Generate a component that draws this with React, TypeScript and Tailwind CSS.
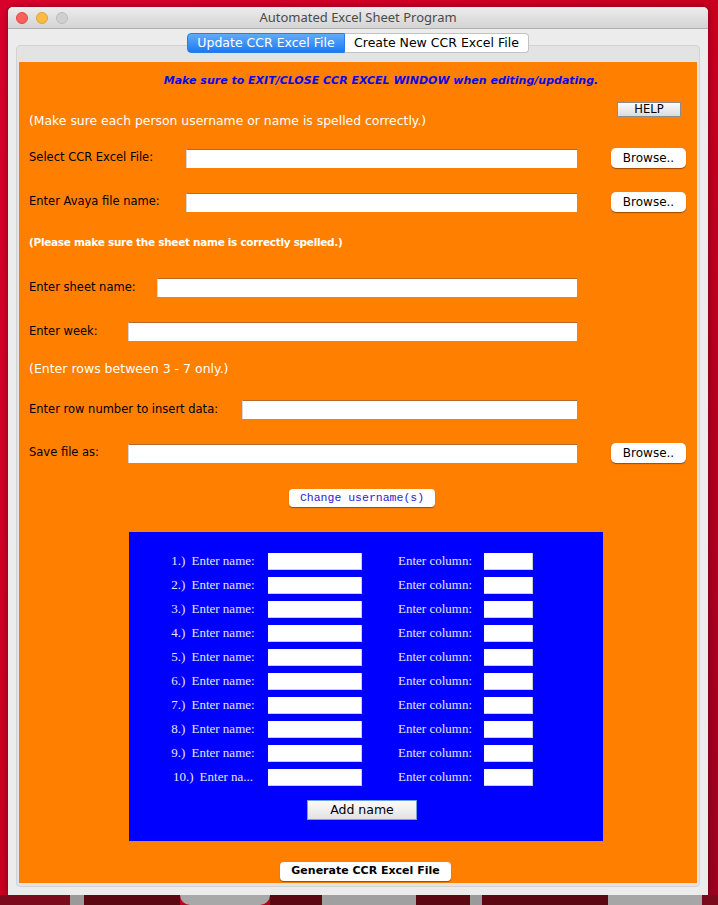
import React from "react";

const names = ["1.)", "2.)", "3.)", "4.)", "5.)", "6.)", "7.)", "8.)", "9.)", "10.)"];

const Field = ({ w }: { w: string }) => (
  <div className={`${w} h-[19px] bg-white border-t border-l border-t-[#b8692a] border-l-[#d6d6d6]`} />
);

const Browse = () => (
  <div className="ml-[34px] w-[75px] h-[20px] rounded-[5px] bg-white shadow-[0_1px_1px_rgba(120,50,0,0.7)] flex items-center justify-center text-[12px] text-black">
    Browse..
  </div>
);

const App = () => {
  return (
    <div className="w-[718px] h-[905px] overflow-hidden bg-gradient-to-br from-[#d8002c] via-[#c9001f] to-[#9c0020] pt-[7px] font-['DejaVu_Sans',sans-serif]">
      {/* Window */}
      <div className="ml-[8px] w-[700px] h-[888px] rounded-t-[5px] bg-[#ececec] shadow-[0_0_6px_rgba(0,0,0,0.4)] overflow-hidden">
        {/* Title bar */}
        <div className="relative h-[22px] bg-gradient-to-b from-[#ececec] to-[#d4d4d4] border-b border-[#b1b1b1] flex items-center justify-center">
          <div className="absolute left-[8px] top-[5px] flex gap-[8px]">
            <div className="w-[12px] h-[12px] rounded-full bg-[#fc605b] border border-[#de4a44]" />
            <div className="w-[12px] h-[12px] rounded-full bg-[#fdbc40] border border-[#dea236]" />
            <div className="w-[12px] h-[12px] rounded-full bg-[#cfcfcf] border border-[#bcbcbc]" />
          </div>
          <span className="text-[13px] text-[#4a4a4a] font-['Noto_Sans',sans-serif]">Automated Excel Sheet Program</span>
        </div>

        {/* Body */}
        <div className="px-[8px]">
          <div className="relative z-10 mt-[4px] h-[20px] flex justify-center text-[12.5px]">
            <div className="w-[158px] h-[20px] rounded-l-[4px] bg-gradient-to-b from-[#5fabf9] to-[#1b79f3] border border-[#2a7ce8] text-white flex items-center justify-center">
              Update CCR Excel File
            </div>
            <div className="w-[184px] h-[20px] rounded-r-[4px] bg-white border border-l-0 border-[#c2c2c2] text-black flex items-center justify-center">
              Create New CCR Excel File
            </div>
          </div>

          <div className="-mt-[8px] w-[684px] h-[842px] rounded-[4px] border border-[#d3d3d3] bg-[#e3e3e3] pt-[16px] px-[2px]">
            <div className="h-[821px] bg-[#ff7f00] text-[11.5px] text-black">
              <div className="pt-[12px] h-[26px] pl-[46px] flex justify-center">
                <span className="h-[14px] leading-[14px] text-[11px] font-bold italic text-[#0a0ae6]">
                  Make sure to EXIT/CLOSE CCR EXCEL WINDOW when editing/updating.
                </span>
              </div>

              <div className="mt-[12px] h-[30px] pl-[10px] flex justify-between items-start">
                <span className="mt-[14px] leading-[14px] text-[12.4px] text-white">
                  (Make sure each person username or name is spelled correctly.)
                </span>
                <div className="mt-[2px] mr-[16px] w-[64px] h-[15px] bg-gradient-to-b from-[#fbfbfb] to-[#dcdcdc] border border-[#8c8c8c] flex items-center justify-center text-[11.5px] leading-none">
                  HELP
                </div>
              </div>

              <div className="mt-[18px] h-[20px] pl-[10px] flex items-center">
                <span className="w-[157px]">Select CCR Excel File:</span>
                <Field w="w-[391px]" />
                <Browse />
              </div>

              <div className="mt-[24px] h-[20px] pl-[10px] flex items-center">
                <span className="w-[157px]">Enter Avaya file name:</span>
                <Field w="w-[391px]" />
                <Browse />
              </div>

              <div className="mt-[24px] h-[14px] pl-[10px] flex items-center">
                <span className="text-[10.5px] tracking-[-0.3px] font-bold text-white">(Please make sure the sheet name is correctly spelled.)</span>
              </div>

              <div className="mt-[28px] h-[19px] pl-[10px] flex items-center">
                <span className="w-[128px]">Enter sheet name:</span>
                <Field w="w-[420px]" />
              </div>

              <div className="mt-[25px] h-[19px] pl-[10px] flex items-center">
                <span className="w-[99px]">Enter week:</span>
                <Field w="w-[449px]" />
              </div>

              <div className="mt-[21px] h-[14px] pl-[10px] flex items-center">
                <span className="text-[12.5px] text-white">(Enter rows between 3 - 7 only.)</span>
              </div>

              <div className="mt-[24px] h-[19px] pl-[10px] flex items-center">
                <span className="w-[213px]">Enter row number to insert data:</span>
                <Field w="w-[335px]" />
              </div>

              <div className="mt-[24px] h-[20px] pl-[10px] flex items-center">
                <span className="w-[99px]">Save file as:</span>
                <Field w="w-[449px]" />
                <Browse />
              </div>

              <div className="mt-[26px] h-[18px] flex">
                <div className="ml-[270px] w-[146px] h-[18px] rounded-[4px] bg-white shadow-[0_1px_1px_rgba(120,50,0,0.7)] flex items-center justify-center text-[11.5px] text-[#2a22d8] font-['Liberation_Mono',monospace]">
                  Change username(s)
                </div>
              </div>

              <div className="mt-[25px] ml-[110px] w-[474px] h-[309px] bg-[#0000ff] pt-[17px] font-['Liberation_Serif',serif] text-[13px] text-[#e4e4fa]">
                {names.map((n, i) => (
                  <div key={n} className="h-[24px] flex items-center">
                    <div className="ml-[39px] w-[90px] flex justify-center gap-[6px] whitespace-nowrap">
                      <span>{n}</span>
                      <span>{i === 9 ? "Enter na..." : "Enter name:"}</span>
                    </div>
                    <div className="ml-[10px] w-[94px] h-[17px] bg-white border-r border-b border-[#cfcfcf]" />
                    <span className="ml-[36px] w-[86px]">Enter column:</span>
                    <div className="w-[49px] h-[17px] bg-white border-r border-b border-[#cfcfcf]" />
                  </div>
                ))}
                <div className="mt-[11px] ml-[178px] w-[110px] h-[20px] bg-gradient-to-b from-[#fcfcfc] to-[#e2e2e2] border border-[#6ea2d9] flex items-center justify-center font-['DejaVu_Sans',sans-serif] text-[12.5px] text-black">
                  Add name
                </div>
              </div>

              <div className="mt-[21px] h-[19px] flex">
                <div className="ml-[261px] w-[171px] h-[19px] rounded-[4px] bg-white shadow-[0_1px_1px_rgba(120,50,0,0.7)] flex items-center justify-center text-[11px] font-bold text-black">
                  Generate CCR Excel File
                </div>
              </div>
            </div>
          </div>
        </div>
      </div>

      {/* Desktop below window */}
      <div className="h-[10px] flex">
        <div className="w-[70px] bg-[#7a0a1c]" />
        <div className="w-[14px] bg-[#9a9a9a]" />
        <div className="w-[96px] bg-[#5c0812]" />
        <div className="w-[90px] rounded-b-full bg-[#a8a8a8]" />
        <div className="w-[52px] bg-[#5c0812]" />
        <div className="w-[94px] bg-[#a0a0a0]" />
        <div className="w-[54px] bg-[#5c0812]" />
        <div className="w-[12px] bg-[#9a9a9a]" />
        <div className="w-[126px] bg-[#5c0812]" />
        <div className="w-[94px] bg-[#a6a6a6]" />
        <div className="flex-1 bg-[#7a0a1c]" />
      </div>
    </div>
  );
};

export default App;
